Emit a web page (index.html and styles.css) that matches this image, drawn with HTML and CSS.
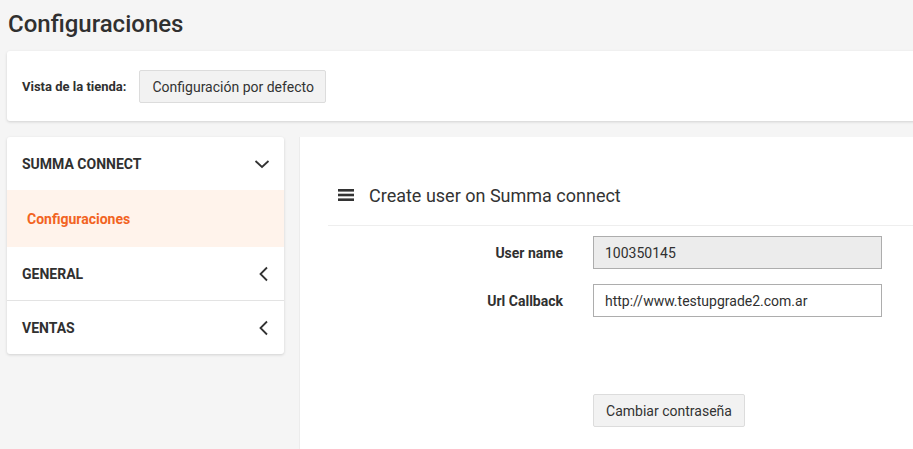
FILE: index.html
```html
<!DOCTYPE html>
<html lang="es">
<head>
<meta charset="utf-8">
<title>Configuraciones</title>
<link rel="stylesheet" href="styles.css">
</head>
<body>
<div class="page">
  <h1 class="page-title">Configuraciones</h1>
  <div class="store-card">
    <span class="store-label">Vista de la tienda:</span>
    <button class="btn">Configuración por defecto</button>
  </div>
  <div class="layout">
    <nav class="sidebar">
      <div class="nav-item">
        <span>SUMMA CONNECT</span>
        <svg class="chev" width="16" height="16" viewBox="0 0 16 16"><path d="M1.5 5 L8 11 L14.5 5" fill="none" stroke="#333" stroke-width="1.8"/></svg>
      </div>
      <div class="nav-sub active">Configuraciones</div>
      <div class="nav-item bordered">
        <span>GENERAL</span>
        <svg class="chev" width="16" height="16" viewBox="0 0 16 16"><path d="M13 1.5 L6.5 8 L13 14.5" fill="none" stroke="#333" stroke-width="1.8"/></svg>
      </div>
      <div class="nav-item">
        <span>VENTAS</span>
        <svg class="chev" width="16" height="16" viewBox="0 0 16 16"><path d="M13 1.5 L6.5 8 L13 14.5" fill="none" stroke="#333" stroke-width="1.8"/></svg>
      </div>
    </nav>
    <main class="panel">
      <div class="panel-head">
        <svg class="menu-icon" width="16" height="14" viewBox="0 0 16 14"><rect x="0" y="1" width="16" height="2.6" fill="#333"/><rect x="0" y="5.7" width="16" height="2.6" fill="#333"/><rect x="0" y="10.4" width="16" height="2.6" fill="#333"/></svg>
        <span>Create user on Summa connect</span>
      </div>
      <div class="form">
        <div class="form-row">
          <label class="form-label">User name</label>
          <div class="input disabled">100350145</div>
        </div>
        <div class="form-row">
          <label class="form-label">Url Callback</label>
          <div class="input">http://www.testupgrade2.com.ar</div>
        </div>
        <div class="form-row actions">
          <span class="form-label"></span>
          <button class="btn">Cambiar contraseña</button>
        </div>
      </div>
    </main>
  </div>
</div>
</body>
</html>
```
FILE: styles.css
```css
html, body {
  margin: 0;
  padding: 0;
  background: #f5f5f5;
  overflow: hidden;
  height: 449px;
  font-family: Roboto, "Liberation Sans", sans-serif;
  color: #303030;
}
.page {
  width: 960px;
  padding-left: 7px;
}
.page-title {
  margin: 0;
  padding: 10px 0 0 1px;
  height: 51px;
  box-sizing: border-box;
  font-size: 24px;
  font-weight: 500;
  line-height: 28px;
  color: #303030;
}
.store-card {
  background: #fff;
  height: 70px;
  box-sizing: border-box;
  display: flex;
  align-items: center;
  padding-left: 15px;
  box-shadow: 0 1px 3px rgba(0,0,0,0.15);
  border-radius: 3px 0 0 3px;
}
.store-label {
  font-size: 13px;
  font-weight: 700;
  margin-right: 13px;
  color: #303030;
}
.btn {
  font-family: Roboto, "Liberation Sans", sans-serif;
  font-size: 14px;
  color: #333;
  background: #f2f2f2;
  border: 1px solid #dcdcdc;
  border-radius: 2px;
  height: 33px;
  padding: 0 12px;
  white-space: nowrap;
  cursor: pointer;
}
.store-card .btn {
  width: 187px;
  margin-top: 1px;
}
.layout {
  display: flex;
  gap: 15px;
  margin-top: 16px;
  align-items: flex-start;
}
.sidebar {
  width: 277px;
  background: #fff;
  border-radius: 3px;
  box-shadow: 0 1px 3px rgba(0,0,0,0.15);
  overflow: hidden;
}
.nav-item {
  height: 53px;
  display: flex;
  align-items: center;
  justify-content: space-between;
  padding: 0 14px 0 15px;
  font-size: 14px;
  font-weight: 700;
  color: #303030;
}
.nav-item.bordered {
  border-bottom: 1px solid #e3e3e3;
}
.nav-sub {
  height: 57px;
  display: flex;
  align-items: center;
  padding-left: 20px;
  font-size: 14px;
  font-weight: 700;
}
.nav-sub.active {
  background: #fff3eb;
  color: #f26322;
}
.panel {
  flex: 1;
  background: #fff;
  height: 330px;
  padding: 43px 0 0 28px;
  border-left: 1px solid #ececec;
}
.panel-head {
  display: flex;
  align-items: center;
  gap: 15px;
  padding-left: 10px;
  height: 30px;
  font-size: 18px;
  color: #333;
  padding-bottom: 15px;
  border-bottom: 1px solid #eeeeee;
}
.form {
  padding-top: 10px;
}
.form-row {
  display: flex;
  align-items: center;
  gap: 30px;
  margin-bottom: 15px;
}
.form-label {
  width: 235px;
  text-align: right;
  font-size: 14px;
  font-weight: 700;
  color: #303030;
}
.input {
  width: 289px;
  height: 33px;
  box-sizing: border-box;
  border: 1px solid #adadad;
  padding: 0 11px;
  display: flex;
  align-items: center;
  font-size: 14px;
  color: #303030;
  background: #fff;
}
.input.disabled {
  background: #ececec;
}
.form-row.actions {
  margin-top: 77px;
}
.actions .btn {
  width: 152px;
}
```
